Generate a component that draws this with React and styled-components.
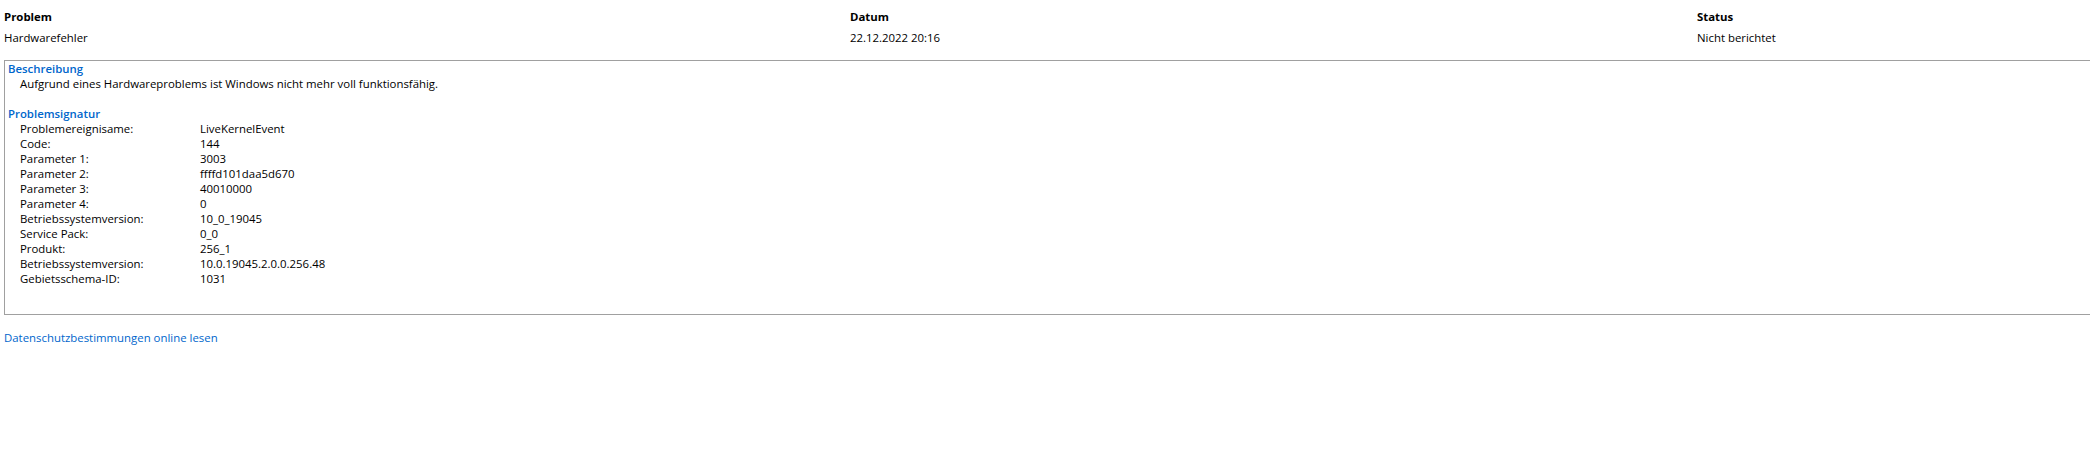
import React from "react";
import styled, { createGlobalStyle } from "styled-components";

const Global = createGlobalStyle`
  html, body { margin: 0; padding: 0; background: #ffffff; overflow: hidden; }
  body { font-family: "Open Sans", "Noto Sans", sans-serif; font-size: 11.4px; color: #000; }
`;

const Page = styled.div`
  width: 2090px;
  height: 451px;
  background: #fff;
`;

const Summary = styled.div`
  display: grid;
  grid-template-columns: 846px 847px 1fr;
  padding: 9px 0 0 4px;
  row-gap: 6px;
  line-height: 15px;
`;

const HeadCell = styled.div`
  font-weight: 700;
`;

const Cell = styled.div``;

const Box = styled.div`
  margin: 15px 0 0 4px;
  width: 2100px;
  border: 1px solid #a0a0a0;
  padding: 0 0 28px 3px;
  line-height: 15px;
`;

const SectionTitle = styled.div`
  color: #0066cc;
  font-weight: 600;
`;

const Indented = styled.div`
  padding-left: 12px;
`;

const Spacer = styled.div`
  height: 15px;
`;

const SigRow = styled.div`
  display: grid;
  grid-template-columns: 180px 1fr;
  padding-left: 12px;
`;

const Link = styled.a`
  display: inline-block;
  margin: 15px 0 0 4px;
  color: #0066cc;
  text-decoration: none;
  line-height: 15px;
`;

const sig = [
  ["Problemereignisame:", "LiveKernelEvent"],
  ["Code:", "144"],
  ["Parameter 1:", "3003"],
  ["Parameter 2:", "ffffd101daa5d670"],
  ["Parameter 3:", "40010000"],
  ["Parameter 4:", "0"],
  ["Betriebssystemversion:", "10_0_19045"],
  ["Service Pack:", "0_0"],
  ["Produkt:", "256_1"],
  ["Betriebssystemversion:", "10.0.19045.2.0.0.256.48"],
  ["Gebietsschema-ID:", "1031"],
];

export default function App() {
  return (
    <Page>
      <Global />
      <Summary>
        <HeadCell>Problem</HeadCell>
        <HeadCell>Datum</HeadCell>
        <HeadCell>Status</HeadCell>
        <Cell>Hardwarefehler</Cell>
        <Cell>22.12.2022 20:16</Cell>
        <Cell>Nicht berichtet</Cell>
      </Summary>
      <Box>
        <SectionTitle>Beschreibung</SectionTitle>
        <Indented>Aufgrund eines Hardwareproblems ist Windows nicht mehr voll funktionsfähig.</Indented>
        <Spacer />
        <SectionTitle>Problemsignatur</SectionTitle>
        {sig.map(([k, v], i) => (
          <SigRow key={i}>
            <span>{k}</span>
            <span>{v}</span>
          </SigRow>
        ))}
      </Box>
      <Link href="#">Datenschutzbestimmungen online lesen</Link>
    </Page>
  );
}
